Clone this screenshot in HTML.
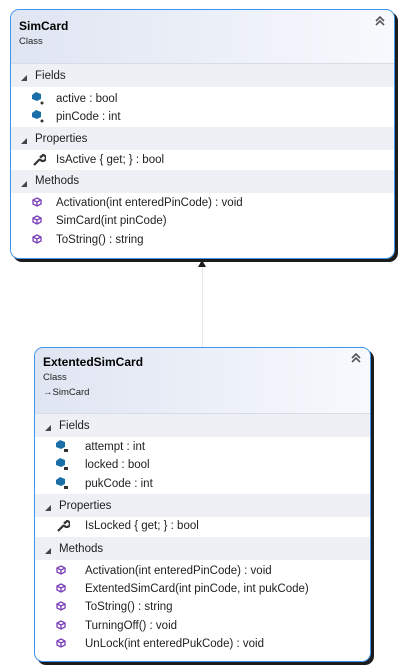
<!DOCTYPE html>
<html><head><meta charset="utf-8"><style>
*{margin:0;padding:0;box-sizing:border-box}
body{width:403px;height:671px;background:#fff;position:relative;overflow:hidden;font-family:"Liberation Sans",sans-serif;font-size:11.5px;color:#1e1e1e}
.box{position:absolute;border:1px solid #3d95f0;border-radius:9px;background:#fff;box-shadow:3px 3px 0 #1c1c1c;overflow:hidden}
.hdr{position:absolute;left:0;right:0;top:0;background:linear-gradient(90deg,#dfe5f2,#f7f9fd);border-bottom:1px solid #d8dce6}
.sec{position:absolute;left:0;right:0;background:#eef0f5;height:23px}
.t{position:absolute;white-space:nowrap;transform:translateY(2px)}
.title{font-weight:bold;font-size:12px;color:#000}
.small{font-size:9.5px;color:#1e1e1e}
.tri{position:absolute;width:0;height:0;border-left:6px solid transparent;border-bottom:6px solid #444;transform:translateY(2px)}
</style></head><body>

<div style="position:absolute;left:202px;top:264px;width:1px;height:84px;background:#e8e8ec"></div>
<div style="position:absolute;left:198px;top:260px;width:0;height:0;border-left:4px solid transparent;border-right:4px solid transparent;border-bottom:7px solid #1c1c1c"></div>

<div class="box" style="left:10px;top:9px;width:385px;height:250px">
  <div class="hdr" style="height:54px"></div>
  <div class="t title" style="left:8px;top:7px">SimCard</div>
  <div class="t small" style="left:8px;top:24px">Class</div>
  <svg style="position:absolute;left:364px;top:6px" width="10" height="10" viewBox="0 0 10 10"><path d="M1 5L5 1L9 5M1 9L5 5L9 9" stroke="#555" stroke-width="1.6" fill="none"/></svg>

  <div class="sec" style="top:54px"></div>
  <div class="tri" style="left:10px;top:63px"></div>
  <div class="t" style="left:24px;top:58px">Fields</div>
  <svg style="position:absolute;left:20px;top:81px" width="14" height="14"><path d="M1 4L5 1L10 3L10 8L6 10L1 8Z" fill="#1b6fa8"/><circle cx="11" cy="12" r="1.5" fill="#333"/></svg>
  <div class="t" style="left:45px;top:81px">active : bool</div>
  <svg style="position:absolute;left:20px;top:99px" width="14" height="14"><path d="M1 4L5 1L10 3L10 8L6 10L1 8Z" fill="#1b6fa8"/><circle cx="11" cy="12" r="1.5" fill="#333"/></svg>
  <div class="t" style="left:45px;top:99px">pinCode : int</div>

  <div class="sec" style="top:117px"></div>
  <div class="tri" style="left:10px;top:126px"></div>
  <div class="t" style="left:24px;top:121px">Properties</div>
  <svg style="position:absolute;left:21px;top:143px" width="14" height="14"><path d="M2 12L8 6M8 6a3 3 0 1 0 3-4l-2 2-1-1" stroke="#333" stroke-width="2.2" fill="none"/></svg>
  <div class="t" style="left:45px;top:142px">IsActive { get; } : bool</div>

  <div class="sec" style="top:160px"></div>
  <div class="tri" style="left:10px;top:169px"></div>
  <div class="t" style="left:24px;top:163px">Methods</div>
  <svg style="position:absolute;left:21px;top:187px" width="10" height="10"><path d="M5 1L9 3V7L5 9L1 7V3Z M1 3L5 5L9 3M5 5V9" stroke="#7a3fb5" stroke-width="1.3" fill="none"/></svg>
  <div class="t" style="left:45px;top:185px">Activation(int enteredPinCode) : void</div>
  <svg style="position:absolute;left:21px;top:205px" width="10" height="10"><path d="M5 1L9 3V7L5 9L1 7V3Z M1 3L5 5L9 3M5 5V9" stroke="#7a3fb5" stroke-width="1.3" fill="none"/></svg>
  <div class="t" style="left:45px;top:203px">SimCard(int pinCode)</div>
  <svg style="position:absolute;left:21px;top:224px" width="10" height="10"><path d="M5 1L9 3V7L5 9L1 7V3Z M1 3L5 5L9 3M5 5V9" stroke="#7a3fb5" stroke-width="1.3" fill="none"/></svg>
  <div class="t" style="left:45px;top:222px">ToString() : string</div>
</div>

<div class="box" style="left:34px;top:347px;width:337px;height:315px">
  <div class="hdr" style="height:66px"></div>
  <div class="t title" style="left:8px;top:5px">ExtentedSimCard</div>
  <div class="t small" style="left:8px;top:22px">Class</div>
  <div class="t small" style="left:8px;top:37px">&#8594;SimCard</div>
  <svg style="position:absolute;left:316px;top:5px" width="10" height="10" viewBox="0 0 10 10"><path d="M1 5L5 1L9 5M1 9L5 5L9 9" stroke="#555" stroke-width="1.6" fill="none"/></svg>

  <div class="sec" style="top:66px"></div>
  <div class="tri" style="left:10px;top:75px"></div>
  <div class="t" style="left:24px;top:70px">Fields</div>
  <svg style="position:absolute;left:20px;top:91px" width="14" height="14"><path d="M1 4L5 1L10 3L10 8L6 10L1 8Z" fill="#1b6fa8"/><rect x="9" y="10" width="4" height="3" fill="#333"/></svg>
  <div class="t" style="left:50px;top:91px">attempt : int</div>
  <svg style="position:absolute;left:20px;top:109px" width="14" height="14"><path d="M1 4L5 1L10 3L10 8L6 10L1 8Z" fill="#1b6fa8"/><rect x="9" y="10" width="4" height="3" fill="#333"/></svg>
  <div class="t" style="left:50px;top:109px">locked : bool</div>
  <svg style="position:absolute;left:20px;top:128px" width="14" height="14"><path d="M1 4L5 1L10 3L10 8L6 10L1 8Z" fill="#1b6fa8"/><rect x="9" y="10" width="4" height="3" fill="#333"/></svg>
  <div class="t" style="left:50px;top:128px">pukCode : int</div>

  <div class="sec" style="top:146px"></div>
  <div class="tri" style="left:10px;top:155px"></div>
  <div class="t" style="left:24px;top:150px">Properties</div>
  <svg style="position:absolute;left:21px;top:171px" width="14" height="14"><path d="M2 12L8 6M8 6a3 3 0 1 0 3-4l-2 2-1-1" stroke="#333" stroke-width="2.2" fill="none"/></svg>
  <div class="t" style="left:50px;top:170px">IsLocked { get; } : bool</div>

  <div class="sec" style="top:189px"></div>
  <div class="tri" style="left:10px;top:198px"></div>
  <div class="t" style="left:24px;top:193px">Methods</div>
  <svg style="position:absolute;left:21px;top:217px" width="10" height="10"><path d="M5 1L9 3V7L5 9L1 7V3Z M1 3L5 5L9 3M5 5V9" stroke="#7a3fb5" stroke-width="1.3" fill="none"/></svg>
  <div class="t" style="left:50px;top:215px">Activation(int enteredPinCode) : void</div>
  <svg style="position:absolute;left:21px;top:235px" width="10" height="10"><path d="M5 1L9 3V7L5 9L1 7V3Z M1 3L5 5L9 3M5 5V9" stroke="#7a3fb5" stroke-width="1.3" fill="none"/></svg>
  <div class="t" style="left:50px;top:233px">ExtentedSimCard(int pinCode, int pukCode)</div>
  <svg style="position:absolute;left:21px;top:253px" width="10" height="10"><path d="M5 1L9 3V7L5 9L1 7V3Z M1 3L5 5L9 3M5 5V9" stroke="#7a3fb5" stroke-width="1.3" fill="none"/></svg>
  <div class="t" style="left:50px;top:251px">ToString() : string</div>
  <svg style="position:absolute;left:21px;top:272px" width="10" height="10"><path d="M5 1L9 3V7L5 9L1 7V3Z M1 3L5 5L9 3M5 5V9" stroke="#7a3fb5" stroke-width="1.3" fill="none"/></svg>
  <div class="t" style="left:50px;top:270px">TurningOff() : void</div>
  <svg style="position:absolute;left:21px;top:290px" width="10" height="10"><path d="M5 1L9 3V7L5 9L1 7V3Z M1 3L5 5L9 3M5 5V9" stroke="#7a3fb5" stroke-width="1.3" fill="none"/></svg>
  <div class="t" style="left:50px;top:288px">UnLock(int enteredPukCode) : void</div>
</div>
</body></html>
